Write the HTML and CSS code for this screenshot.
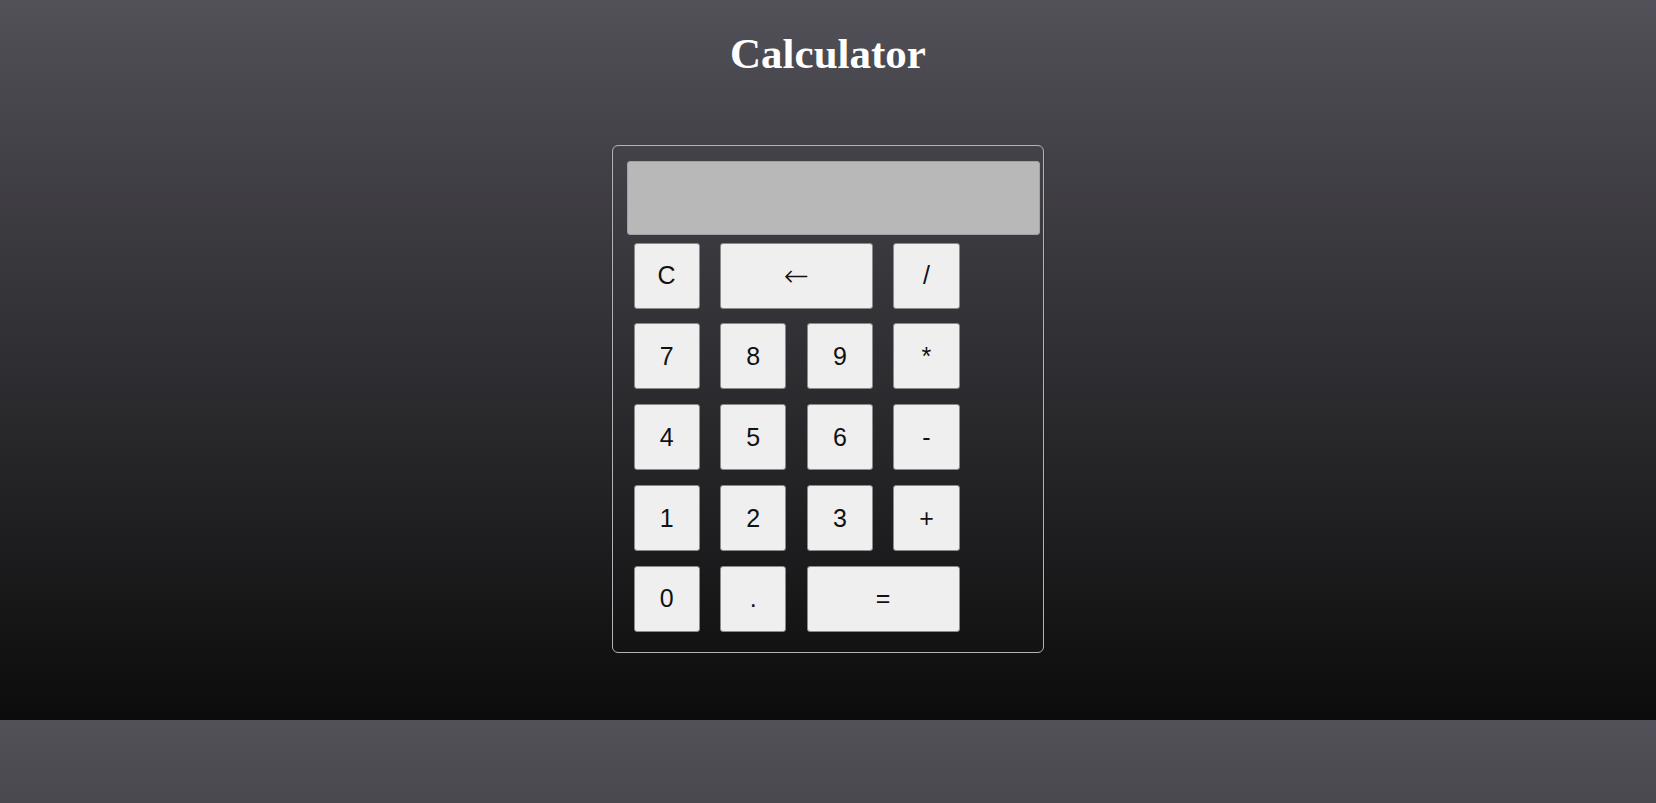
FILE: index.html
```html
<!DOCTYPE html>
<html lang="en">
<head>
<meta charset="utf-8">
<title>Calculator</title>
<link rel="stylesheet" href="styles.css">
</head>
<body>
<h1 class="title">Calculator</h1>
<div class="calc">
  <div class="display"></div>
  <div class="keys">
    <button class="key">C</button>
    <button class="key wide"><span class="arrow">&larr;</span></button>
    <button class="key">/</button>
    <button class="key">7</button>
    <button class="key">8</button>
    <button class="key">9</button>
    <button class="key">*</button>
    <button class="key">4</button>
    <button class="key">5</button>
    <button class="key">6</button>
    <button class="key">-</button>
    <button class="key">1</button>
    <button class="key">2</button>
    <button class="key">3</button>
    <button class="key">+</button>
    <button class="key">0</button>
    <button class="key">.</button>
    <button class="key wide">=</button>
  </div>
</div>
</body>
</html>
```

FILE: styles.css
```css
html {
  background: linear-gradient(to bottom, #525058 0px, #0c0c0c 720px);
  background-size: 100% 720px;
  background-repeat: repeat-y;
  min-height: 100%;
}
body {
  margin: 0;
  padding-top: 28px;
  font-family: "Liberation Sans", Arial, sans-serif;
}
.title {
  margin: 0;
  text-align: center;
  font-family: "Liberation Serif", "Times New Roman", serif;
  font-weight: bold;
  font-size: 43px;
  line-height: 52px;
  color: #ffffff;
}
.calc {
  box-sizing: border-box;
  width: 432px;
  height: 508px;
  margin: 65px auto 0;
  border: 1px solid #b4b4b8;
  border-radius: 6px;
  padding: 15px 0 0 14px;
  box-shadow: 0 1px 2px rgba(0,0,0,0.3);
}
.display {
  box-sizing: border-box;
  width: 413px;
  height: 74px;
  background: #b8b8b8;
  border: 1px solid #a2a2a2;
  border-radius: 3px;
}
.keys {
  display: grid;
  grid-template-columns: repeat(4, 66.3px);
  grid-auto-rows: 66px;
  column-gap: 20.3px;
  row-gap: 14.8px;
  margin: 7.7px 0 0 6.5px;
}
.key {
  box-sizing: border-box;
  margin: 0;
  padding: 0;
  background: #efefef;
  border: 1px solid #8a8a8a;
  border-radius: 3px;
  color: #111;
  font-family: "Liberation Sans", Arial, sans-serif;
  font-size: 25px;
  line-height: 1;
}
.wide {
  grid-column: span 2;
}
.arrow {
  font-family: "DejaVu Sans", sans-serif;
  font-size: 30px;
  font-weight: 300;
}
```
